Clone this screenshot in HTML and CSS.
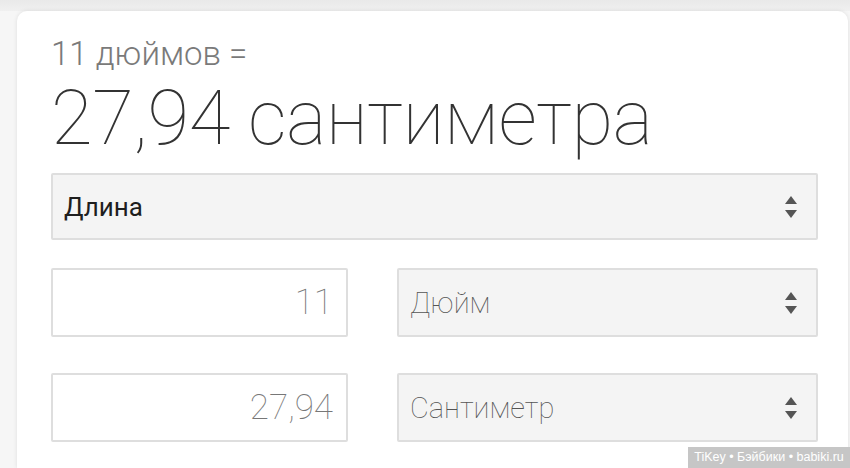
FILE: index.html
```html
<!DOCTYPE html>
<html lang="ru">
<head>
<meta charset="utf-8">
<title>Конвертер</title>
<link rel="stylesheet" href="styles.css">
</head>
<body>
<div class="page">
  <div class="card">
    <div class="from">11 дюймов =</div>
    <div class="result">27,94 сантиметра</div>
    <div class="select select-main">
      <span class="select-text">Длина</span>
      <svg class="arrows" width="12" height="22" viewBox="0 0 12 22"><polygon points="0,8 6,0 12,8" /><polygon points="0,14 12,14 6,22" /></svg>
    </div>
    <div class="row">
      <div class="input">11</div>
      <div class="select">
        <span class="select-text light">Дюйм</span>
        <svg class="arrows" width="12" height="22" viewBox="0 0 12 22"><polygon points="0,8 6,0 12,8" /><polygon points="0,14 12,14 6,22" /></svg>
      </div>
    </div>
    <div class="row">
      <div class="input">27,94</div>
      <div class="select">
        <span class="select-text light">Сантиметр</span>
        <svg class="arrows" width="12" height="22" viewBox="0 0 12 22"><polygon points="0,8 6,0 12,8" /><polygon points="0,14 12,14 6,22" /></svg>
      </div>
    </div>
  </div>
  <div class="watermark">TiKey • Бэйбики • babiki.ru</div>
</div>
</body>
</html>
```
FILE: styles.css
```css
html, body {
  margin: 0;
  padding: 0;
}
body {
  width: 850px;
  height: 468px;
  overflow: hidden;
  background: #f6f6f6;
  font-family: Roboto, "Noto Sans", sans-serif;
}
.page {
  position: relative;
  height: 468px;
  padding: 11px 2px 0 17px;
  box-sizing: border-box;
  background: linear-gradient(#e9e9e9, #f0f0f0 11px, #f6f6f6 11px);
}
.card {
  background: #fff;
  border-radius: 10px 10px 0 0;
  box-shadow: 0 0 4px rgba(0,0,0,0.10);
  height: 100%;
  box-sizing: border-box;
  padding: 23px 30px 0 34px;
}
.from {
  font-size: 33px;
  line-height: 40px;
  font-weight: 300;
  color: #7a7a7a;
}
.result {
  margin-top: 4px;
  font-size: 76px;
  line-height: 80px;
  font-weight: 100;
  color: #333;
  letter-spacing: -0.3px;
}
.select {
  display: flex;
  align-items: center;
  justify-content: space-between;
  background: #f4f4f4;
  border: 2px solid #dedede;
  border-radius: 2px;
  box-sizing: border-box;
  height: 69px;
  padding: 0 19px 0 11px;
}
.select-main {
  margin-top: 15px;
  height: 67px;
}
.select-text {
  font-size: 26px;
  color: #1e1e1e;
}
.select-text.light {
  font-size: 29px;
  font-weight: 100;
  color: #555;
}
.arrows {
  fill: #555;
  display: block;
}
.row {
  display: grid;
  grid-template-columns: 297px 1fr;
  column-gap: 49px;
  margin-top: 28px;
}
.row + .row {
  margin-top: 36px;
}
.input {
  height: 69px;
  box-sizing: border-box;
  border: 2px solid #dedede;
  border-radius: 2px;
  background: #fff;
  display: flex;
  align-items: center;
  justify-content: flex-end;
  padding-right: 13px;
  font-size: 35px;
  font-weight: 100;
  color: #777;
}
.watermark {
  position: absolute;
  right: 0;
  bottom: 0;
  width: 162px;
  height: 21px;
  background: #c6c6c6;
  color: #fff;
  font-family: "Liberation Sans", Arial, sans-serif;
  font-size: 12.5px;
  line-height: 21px;
  text-align: center;
  white-space: nowrap;
}
```
